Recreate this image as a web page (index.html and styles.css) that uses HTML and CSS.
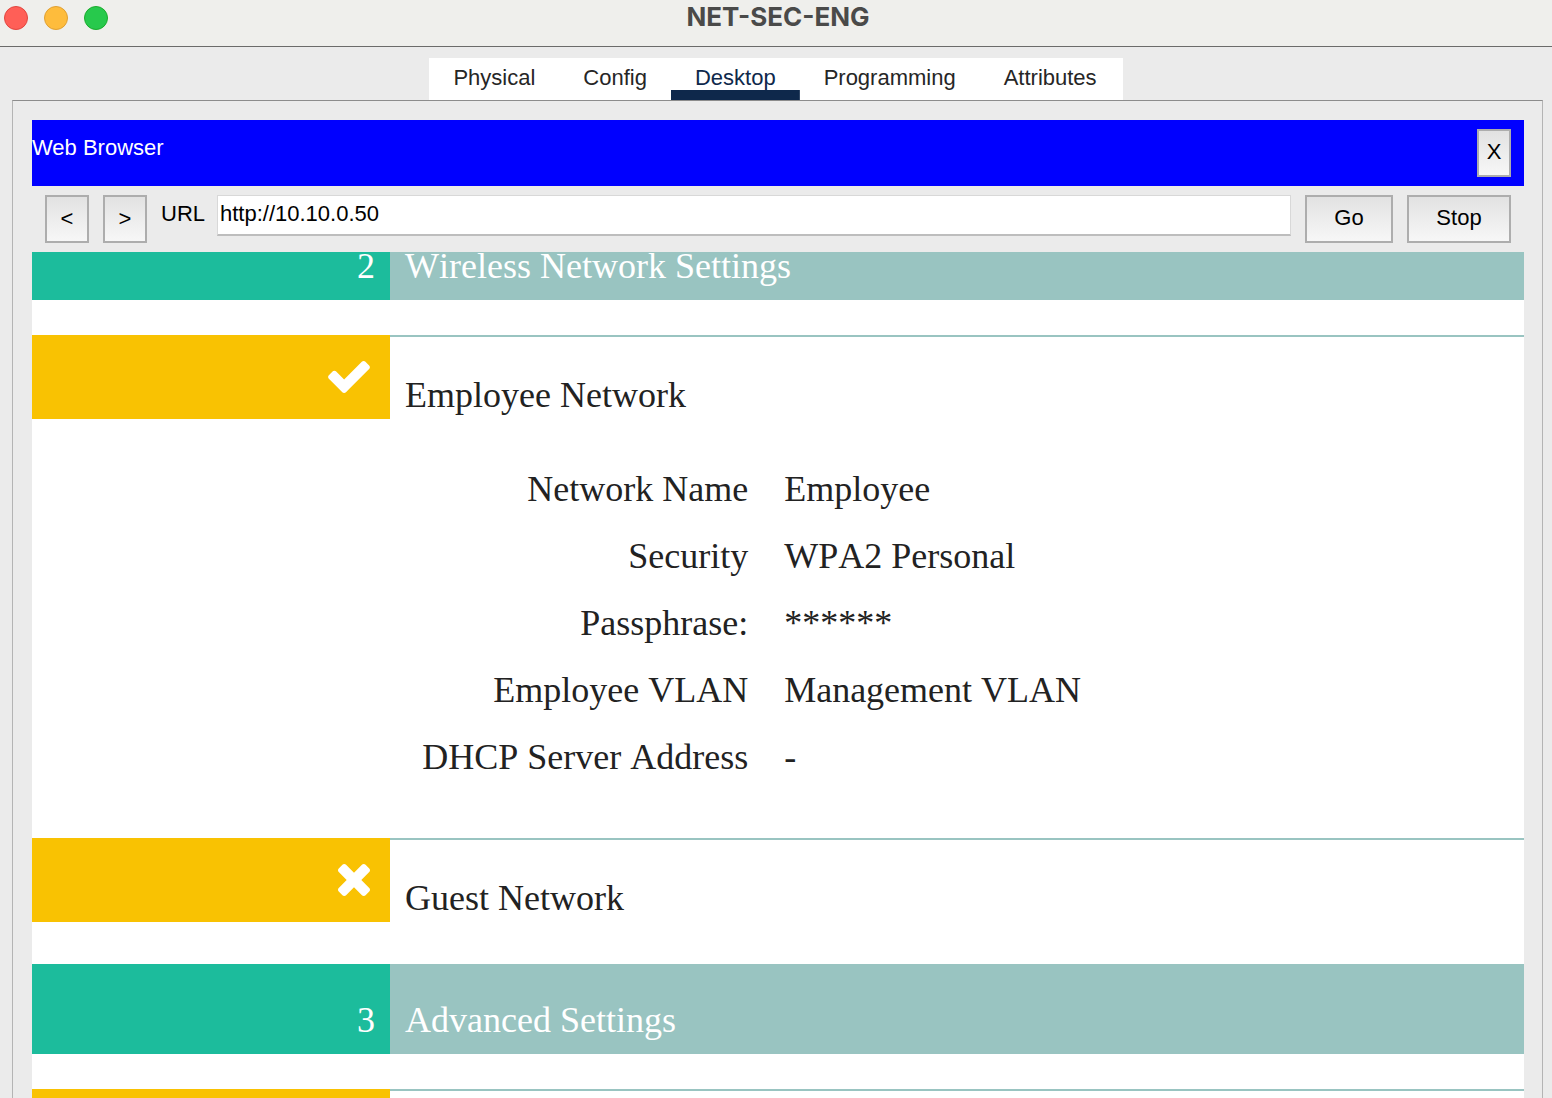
FILE: index.html
```html
<!DOCTYPE html>
<html lang="en">
<head>
<meta charset="utf-8">
<title>NET-SEC-ENG</title>
<link rel="stylesheet" href="styles.css">
</head>
<body>
<header class="titlebar">
  <div class="lights">
    <button class="light light-close" type="button" aria-label="Close"></button>
    <button class="light light-min" type="button" aria-label="Minimize"></button>
    <button class="light light-zoom" type="button" aria-label="Zoom"></button>
  </div>
  <h1 class="title">NET-SEC-ENG</h1>
</header>
<nav class="tabs">
  <button class="tab" type="button">Physical</button>
  <button class="tab" type="button">Config</button>
  <button class="tab tab-active" type="button">Desktop</button>
  <button class="tab" type="button">Programming</button>
  <button class="tab" type="button">Attributes</button>
</nav>
<main class="panel">
  <div class="app-bar">
    <h2 class="app-name">Web Browser</h2>
    <button class="btn btn-close" type="button">X</button>
  </div>
  <form class="toolbar">
    <button class="btn btn-nav" type="button">&lt;</button>
    <button class="btn btn-nav" type="button">&gt;</button>
    <label class="url-label" for="url">URL</label>
    <input class="url" id="url" type="text" value="http://10.10.0.50">
    <button class="btn btn-go" type="button">Go</button>
    <button class="btn btn-stop" type="button">Stop</button>
  </form>
  <div class="page">
    <h3 class="banner banner-scrolled"><span class="banner-num">2</span><span class="banner-title">Wireless Network Settings</span></h3>
    <section class="section">
      <div class="section-head">
        <div class="mark">
          <svg class="icon-check" viewBox="121 334 1550 1188" aria-hidden="true"><path fill="currentColor" d="M1671 566q0 40-28 68l-724 724-136 136q-28 28-68 28t-68-28l-136-136-362-362q-28-28-28-68t28-68l136-136q28-28 68-28t68 28l294 295 656-657q28-28 68-28t68 28l136 136q28 28 28 68z"/></svg>
        </div>
        <h4 class="section-title">Employee Network</h4>
      </div>
      <table class="details">
        <tr><th scope="row">Network Name</th><td>Employee</td></tr>
        <tr><th scope="row">Security</th><td>WPA2 Personal</td></tr>
        <tr><th scope="row">Passphrase:</th><td>******</td></tr>
        <tr><th scope="row">Employee VLAN</th><td>Management VLAN</td></tr>
        <tr><th scope="row">DHCP Server Address</th><td>-</td></tr>
      </table>
    </section>
    <section class="section">
      <div class="section-head">
        <div class="mark">
          <svg class="icon-cross" viewBox="302 366 1188 1188" aria-hidden="true"><path fill="currentColor" d="M1490 1322q0 40-28 68l-136 136q-28 28-68 28t-68-28l-294-294-294 294q-28 28-68 28t-68-28l-136-136q-28-28-28-68t28-68l294-294-294-294q-28-28-28-68t28-68l136-136q28-28 68-28t68 28l294 294 294-294q28-28 68-28t68 28l136 136q28 28 28 68t-28 68l-294 294 294 294q28 28 28 68z"/></svg>
        </div>
        <h4 class="section-title">Guest Network</h4>
      </div>
    </section>
    <h3 class="banner"><span class="banner-num">3</span><span class="banner-title">Advanced Settings</span></h3>
    <section class="section">
      <div class="section-head">
        <div class="mark"></div>
        <h4 class="section-title"></h4>
      </div>
    </section>
  </div>
</main>
</body>
</html>
```

FILE: styles.css
```css
* { box-sizing: border-box; }

body {
  margin: 0;
  height: 100vh;
  overflow: hidden;
  display: flex;
  flex-direction: column;
  background: #ebebeb;
  color: #000;
  font: 22px/26px "Liberation Sans", Arial, sans-serif;
}

h1, h2, h3, h4 { margin: 0; font-size: inherit; font-weight: normal; }

button, input { font: inherit; color: inherit; padding: 0; margin: 0; }

/* window title bar */
.titlebar {
  flex: none;
  height: 47px;
  padding: 0 0 11px 4px;
  display: grid;
  grid-template-columns: 1fr auto 1fr;
  align-items: center;
  background: #efefec;
  border-bottom: 1px solid #6b6b6a;
}
.lights { display: flex; gap: 16px; }
.light { width: 24px; height: 24px; border: 1px solid; border-radius: 50%; }
.light-close { background: #ff5f57; border-color: #e2463f; }
.light-min { background: #febc3c; border-color: #e0a032; }
.light-zoom { background: #27c94c; border-color: #1aac2c; }
.title {
  padding-bottom: 2px;
  font: 700 26px/32px Inter, sans-serif;
  color: #4a4a49;
}

/* device tabs */
.tabs {
  flex: none;
  align-self: center;
  margin-top: 11px;
  padding-right: 2px;
  display: flex;
  background: #fff;
}
.tab {
  height: 42px;
  padding: 0 24px 2px;
  border: 0;
  background: none;
  color: #262626;
}
.tab-active {
  color: #0e284b;
  background: linear-gradient(#0e284b, #0e284b) bottom / 100% 10px no-repeat;
}

.panel {
  flex: 1;
  min-height: 0;
  margin: 0 9px 0 12px;
  padding: 19px 18px 0 19px;
  display: flex;
  flex-direction: column;
  border: 1px solid #b4b4b4;
  border-top-color: #8c8c8c;
  border-bottom: 0;
}

/* browser chrome */
.app-bar, .toolbar {
  flex: none;
  height: 66px;
  padding: 9px 13px;
  display: flex;
  gap: 14px;
}
.app-bar {
  padding-left: 0;
  justify-content: space-between;
  background: #00f;
  color: #fff;
}
.app-name, .url-label { padding-top: 6px; }
.btn {
  height: 48px;
  padding-bottom: 2px;
  border: 2px solid #adadad;
  background: linear-gradient(#e2e2e2, #f7f7f7);
  color: #000;
}
.btn-close { width: 34px; }
.btn-nav { width: 44px; padding-bottom: 0; }
.btn-go { width: 88px; }
.btn-stop { width: 104px; }
.url-label { width: 42px; }
.url {
  flex: 1;
  min-width: 0;
  height: 41px;
  padding: 0 2px 3px;
  border: 1px solid #d8d8d8;
  border-bottom: 2px solid #bdbdbd;
  background: #fff;
}

/* scrolled web page */
.page {
  flex: 1;
  min-height: 0;
  overflow: hidden;
  background: #fff;
  color: #222;
  font: 36px/44px "Liberation Serif", "Times New Roman", serif;
  font-kerning: none;
}
.banner {
  display: grid;
  grid-template-columns: 24% 1fr;
  margin-bottom: 35px;
  background: #99c4c1;
  color: #fff;
}
.banner-scrolled { margin-top: -42px; }
.banner-num, .banner-title { padding: 34px 15px 12px; }
.banner-num { background: #1cbc9c; text-align: right; }
.section { padding-bottom: 42px; }
.section-head {
  height: 84px;
  display: grid;
  grid-template-columns: 24% 1fr;
}
.mark {
  padding-right: 20px;
  display: flex;
  align-items: center;
  justify-content: flex-end;
  background: #f9c202;
  color: #fff;
}
.icon-check { width: 42px; height: 32px; }
.icon-cross { width: 32px; height: 32px; }
.section-title { padding: 36px 15px 0; border-top: 2px solid #99c4c1; }
.details {
  width: 100%;
  margin: 36px 0 6px;
  border-collapse: collapse;
  table-layout: fixed;
}
.details th { width: 48%; height: 67px; padding: 0; font-weight: normal; text-align: right; }
.details td { padding: 0 0 0 36px; }
```
